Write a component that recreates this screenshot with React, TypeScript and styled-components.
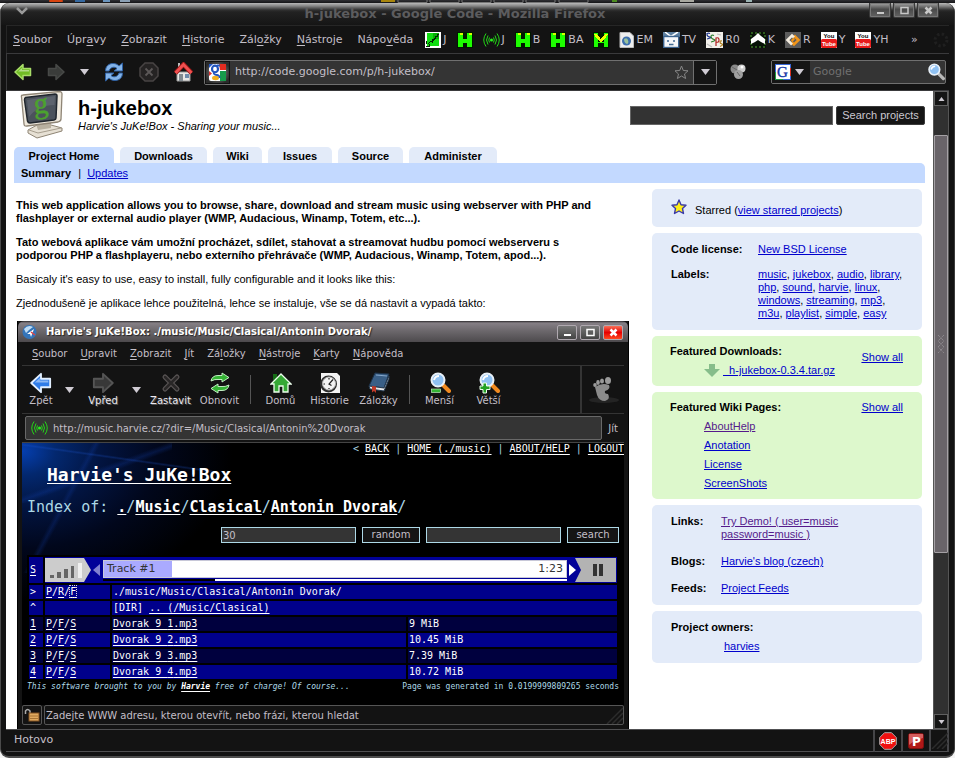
import React from "react";
import styled, { createGlobalStyle, css } from "styled-components";

const SANS = '"DejaVu Sans", sans-serif';
const ARIAL = '"Liberation Sans", Arial, sans-serif';
const MONO = '"DejaVu Sans Mono", monospace';

const GlobalStyle = createGlobalStyle`
  *, *::before, *::after { box-sizing: border-box; }
  body { margin: 0; background: #f4f4f4; overflow: hidden; }
  svg { display: block; flex: none; }
  button, input { font: inherit; color: inherit; margin: 0; padding: 0; border: 0; background: none; border-radius: 0; min-width: 0; }
  input:focus, button:focus { outline: none; }
`;

/* ---------- window chrome ---------- */

const Desktop = styled.div`
  display: flex;
  flex-direction: column;
  height: 100vh;
  font: 11px/14px ${SANS};
  color: #c3bfc7;
`;

const PanelStrip = styled.div`
  height: 3px;
  flex: none;
  background: linear-gradient(#303034, #151517);
  overflow: hidden;
`;

const Frame = styled.div`
  flex: 1;
  min-height: 0;
  display: flex;
  flex-direction: column;
  background: #131313;
  border-left: 1px solid #4a4a4a;
  border-right: 1px solid #3c3c3c;
  border-bottom: 2px solid #4e4e4e;
  border-radius: 9px;
  overflow: hidden;
`;

const TitleBar = styled.header`
  flex: none;
  height: 22px;
  display: grid;
  grid-template-columns: 40px 1fr 85px;
  background: linear-gradient(#b8b8b8 0, #868686 3px, #5a5a5a 5px, #303030 7px, #222 9px, #151515 22px);
`;

const TitleMenu = styled.button`
  display: flex;
  align-items: flex-start;
  padding: 4px 0 0 15px;
`;

const WindowTitle = styled.h1`
  margin: 0;
  padding-top: 2px;
  font: bold 13px/18px ${SANS};
  color: #5c5c5e;
  text-align: center;
  white-space: nowrap;
`;

const WindowButtons = styled.div`
  display: flex;
  gap: 2px;
`;

const WindowButton = styled.button`
  width: 22px;
  height: 15px;
  display: flex;
  justify-content: center;
  align-items: center;
  border: 1px solid #3a3a3a;
  border-top: 0;
  border-radius: 0 0 2px 2px;
  background: linear-gradient(#a5a5a5, #4a4a4a 45%, #626262);
  box-shadow: inset 0 0 0 1px #777;
  color: #c8c8c8;
`;

const Chrome = styled.div`
  flex: 1;
  min-height: 0;
  margin: 0 5px;
  display: flex;
  flex-direction: column;
`;

const MenuRow = styled.div`
  flex: none;
  height: 28px;
  display: flex;
  align-items: center;
  padding: 0 0 0 6px;
  border-top: 1px solid #262626;
  border-left: 1px solid #262626;
  white-space: nowrap;
`;

const MenuList = styled.nav<{ $small?: boolean }>`
  display: flex;
  gap: 15px;
  ${(p) => p.$small && css`font-size: 10px; gap: 13px;`}
`;

const MenuItem = styled.button`
  white-space: nowrap;
  u { text-underline-offset: 2px; }
`;

const BookmarkList = styled.div`
  display: flex;
  flex: 1;
  gap: 10px;
  padding-left: 12px;
`;

const Bookmark = styled.button`
  display: flex;
  align-items: center;
  gap: 2px;
  height: 16px;
`;

const Overflow = styled.button`
  width: 22px;
  height: 16px;
  text-align: left;
`;

const NavRow = styled.div`
  flex: none;
  height: 38px;
  display: flex;
  align-items: center;
  border: solid #3a3a3c;
  border-width: 1px 0 1px 1px;
  padding: 0 3px 0 7px;
`;

const NavButtons = styled.div`
  display: flex;
  align-items: center;
  gap: 15px;
  padding-right: 11px;
`;

const NavButton = styled.button`
  display: flex;
`;

const AddressBar = styled.div`
  flex: 1;
  height: 25px;
  display: flex;
  align-items: center;
  background: #343434;
  border: 1px solid #707070;
  border-radius: 2px;
`;

const SiteBadge = styled.span`
  align-self: stretch;
  width: 25px;
  display: grid;
  place-items: center;
  background: radial-gradient(#a0a0a0, #2a2a2a 80%);
  border: 1px solid #111;
`;

const AddressInput = styled.input`
  flex: 1;
  padding-left: 5px;
`;

const DropButton = styled.button`
  align-self: stretch;
  width: 23px;
  margin-left: 4px;
  display: grid;
  place-items: center;
  background: #151515;
  border-left: 1px solid #707070;
`;

const Foxy = styled.div`
  padding: 0 25px 0 13px;
`;

const SearchBar = styled.div`
  width: 175px;
  height: 24px;
  display: flex;
  align-items: center;
  background: #343434;
  border: 1px solid #707070;
  border-radius: 2px;
`;

const Engine = styled.button`
  align-self: stretch;
  display: flex;
  align-items: center;
  gap: 4px;
  width: 38px;
  padding-left: 3px;
  background: #151515;
`;

const SearchInput = styled.input`
  flex: 1;
  padding-left: 3px;
  &::placeholder { color: #707070; opacity: 1; }
`;

const Viewport = styled.div`
  flex: 1;
  min-height: 0;
  display: grid;
  grid-template-columns: 1fr 16px;
`;

const ScrollTrack = styled.div`
  display: flex;
  flex-direction: column;
  background: #303030;
  border: 1px solid #555;
  border-width: 0 1px;
`;

const ScrollArrow = styled.button`
  height: 15px;
  display: grid;
  place-items: center;
  border: 1px solid #606060;
  background: #151515;
`;

const ScrollSpace = styled.div<{ $grow: number }>`
  flex: ${(p) => p.$grow} 0 0;
`;

const ScrollThumb = styled.div`
  flex: 417 0 0;
  display: grid;
  place-items: center;
  border: 1px solid #a5a1a5;
  border-radius: 1px;
  background: #696469;
`;

const StatusBar = styled.footer`
  flex: none;
  height: 27px;
  display: grid;
  grid-template-columns: 1fr 28px 28px 18px;
  border-top: 1px solid #505052;
  padding-bottom: 4px;
`;

const StatusCell = styled.div<{ $text?: boolean }>`
  display: grid;
  align-items: center;
  justify-items: ${(p) => (p.$text ? "start" : "center")};
  border-right: 2px solid #454548;
  border-bottom: 1px solid #505052;
  padding: ${(p) => (p.$text ? "0 0 2px 8px" : "0")};
`;

/* ---------- project page ---------- */

const Page = styled.main`
  background: #fff;
  color: #000;
  font: 11px/13px ${ARIAL};
  overflow: hidden;
  padding: 0 8px;
`;

const Masthead = styled.div`
  display: flex;
  height: 56px;
  padding: 0 0 0 6px;
`;

const ProjectName = styled.div`
  flex: 1;
  padding: 6px 0 0 14px;
`;

const ProjectTitle = styled.h2`
  margin: 0;
  font: bold 20px/23px ${ARIAL};
`;

const Tagline = styled.em`
  display: block;
`;

const ProjectSearch = styled.form`
  display: flex;
  gap: 3px;
  align-items: flex-start;
  padding-top: 15px;
`;

const ProjectQuery = styled.input`
  width: 203px;
  height: 19px;
  background: #333;
  border: 1px solid #666;
  color: #ccc;
`;

const ProjectSubmit = styled.button`
  width: 89px;
  height: 19px;
  background: #151515;
  border: 1px solid #3a3a3a;
  border-radius: 2px;
  color: #ccc8d0;
`;

const Tabs = styled.nav`
  display: flex;
  gap: 6px;
  height: 16px;
`;

const Tab = styled.a<{ $active?: boolean; $w: number }>`
  width: ${(p) => p.$w}px;
  padding-top: 3px;
  border-radius: 5px 5px 0 0;
  background: ${(p) => (p.$active ? "#c3d9ff" : "#e3ebf9")};
  color: #000;
  font-weight: bold;
  text-align: center;
  text-decoration: none;
`;

const SubTabs = styled.div`
  height: 20px;
  padding: 4px 7px;
  background: #c3d9ff;
  border-radius: 0 5px 0 0;
  b { padding-right: 7px; }
`;

const Link = styled.a<{ $visited?: boolean }>`
  color: ${(p) => (p.$visited ? "#551a8b" : "#0000cc")};
  text-decoration: underline;
  text-underline-offset: 1px;
`;

const Columns = styled.div`
  display: grid;
  grid-template-columns: 1fr 270px;
  gap: 23px;
  padding: 6px 3px 0 2px;
  align-items: start;
`;

const Article = styled.article`
  padding-top: 10px;
  white-space: nowrap;
`;

const Para = styled.p<{ $strong?: boolean }>`
  margin: 0 0 11px;
  font-weight: ${(p) => (p.$strong ? "bold" : "normal")};
`;

const Aside = styled.aside`
  display: flex;
  flex-direction: column;
  gap: 6px;
`;

const Card = styled.section<{ $green?: boolean }>`
  padding: ${(p) => (p.$green ? "9px 19px 9px 18px" : "10px 19px")};
  border-radius: 5px;
  background: ${(p) => (p.$green ? "#ddf8cc" : "#e3ebf9")};
`;

const StarLine = styled.div`
  display: flex;
  align-items: center;
  gap: 8px;
  height: 18px;
  span { padding-top: 4px; }
  svg { margin-bottom: 2px; }
`;

const Facts = styled.dl<{ $label: number; $gap: number }>`
  margin: 0;
  display: grid;
  grid-template-columns: ${(p) => p.$label}px 1fr;
  row-gap: ${(p) => p.$gap}px;
  dt { font-weight: bold; }
  dd { margin: 0; }
`;

const CardSplit = styled.div`
  display: flex;
  justify-content: space-between;
  align-items: center;
  > a { padding-bottom: 7px; }
`;

const CardHead = styled.div`
  display: flex;
  justify-content: space-between;
  font-weight: bold;
  a { font-weight: normal; }
`;

const LinkStack = styled.div<{ $indent: number }>`
  display: flex;
  flex-direction: column;
  align-items: flex-start;
  gap: 6px;
  padding: 6px 0 0 ${(p) => p.$indent}px;
`;

const Download = styled.div`
  display: flex;
  align-items: center;
  gap: 3px;
  height: 13px;
`;

/* ---------- embedded player window ---------- */

const Shot = styled.figure`
  margin: 0 0 0 1px;
  background: #131313;
  color: #c3bfc7;
  font: 10px/13px ${SANS};
  border-left: 1px solid #000;
  border-right: 1px solid #000;
`;

const ShotTitle = styled.div`
  height: 21px;
  display: flex;
  align-items: center;
  gap: 9px;
  padding: 1px 5px 0 4px;
  border-radius: 6px 6px 0 0;
  background: linear-gradient(#2b292b, #857f85 2px, #6a666a 50%, #4d4a4d);
  color: #fff;
  font: bold 10px/14px ${SANS};
  text-shadow: 1px 1px 1px #222;
  strong { flex: 1; }
`;

const ShotButtons = styled.div`
  display: flex;
  gap: 3px;
`;

const ShotButton = styled.button<{ $close?: boolean }>`
  width: 20px;
  height: 15px;
  display: grid;
  place-items: center;
  border: 1px solid #b0a9b0;
  border-radius: 2px;
  color: #fff;
  background: ${(p) => (p.$close ? "linear-gradient(#f87058, #e60000 50%, #ff4a20)" : "linear-gradient(#777, #444)")};
`;

const ShotBody = styled.div`
  margin: 0 4px;
`;

const ShotMenu = styled.div`
  height: 23px;
  padding: 5px 10px;
`;

const ShotToolbar = styled.div`
  height: 49px;
  display: flex;
  border: 1px solid #343434;
  border-width: 1px 0;
`;

const Tool = styled.button<{ $w?: number; $bright?: boolean }>`
  width: ${(p) => p.$w ?? 49}px;
  display: flex;
  flex-direction: column;
  align-items: center;
  padding-top: 6px;
  white-space: nowrap;
  ${(p) => p.$bright && css`color: #ece8ef; text-shadow: 1px 1px 0 #555;`}
`;

const ToolCaret = styled.button`
  width: 19px;
  display: grid;
  place-items: center;
`;

const ToolRule = styled.span`
  width: 12px;
  display: flex;
  justify-content: center;
  padding: 9px 0;
  &::before { content: ""; width: 1px; background: #555; }
`;

const Throbber = styled.div`
  width: 44px;
  margin-left: auto;
  display: grid;
  place-items: center;
  border-left: 2px solid #343434;
`;

const ShotAddress = styled.div`
  height: 29px;
  display: flex;
  align-items: center;
  gap: 6px;
  padding: 0 6px 0 3px;
  border-bottom: 1px solid #444;
`;

const ShotField = styled.div`
  flex: 1;
  height: 24px;
  display: flex;
  align-items: center;
  gap: 5px;
  padding-left: 5px;
  border: 1px solid #686868;
  border-radius: 2px;
  background: #343434;
  input { flex: 1; }
`;

const Jukebox = styled.div`
  height: 262px;
  background:
    linear-gradient(8deg, transparent 47%, rgba(30, 90, 220, 0.25) 50%, transparent 53%) 0 0 / 190px 30px no-repeat,
    linear-gradient(-20deg, transparent 46%, rgba(20, 70, 190, 0.22) 50%, transparent 54%) 0 0 / 150px 60px no-repeat,
    linear-gradient(-62deg, transparent 47%, rgba(20, 70, 190, 0.2) 50%, transparent 53%) 0 0 / 80px 130px no-repeat,
    radial-gradient(ellipse 210px 150px at 0 8px, #053fb0 0, #03286f 16%, #021440 38%, #01071c 65%, #000 100%);
  background-color: #000;
  color: #add8e6;
  font: 10px/12px ${MONO};
  overflow: hidden;
`;

const TopLinks = styled.nav`
  text-align: right;
`;

const JukeLink = styled.a`
  color: #fff;
  text-underline-offset: 2px;
`;

const JukeTitle = styled.h3`
  margin: 0;
  padding: 8px 0 0 25px;
  font: bold 18px/24px ${MONO};
`;

const IndexLine = styled.h4`
  margin: 0;
  padding: 10px 0 0 5px;
  font: 15px/20px ${MONO};
  a { font-weight: bold; }
`;

const JukeForm = styled.form`
  display: flex;
  justify-content: flex-end;
  gap: 6px;
  padding: 10px 5px 0 0;
  font: 10px/12px ${SANS};
  color: #c3bfc7;
`;

const JukeInput = styled.input`
  width: 135px;
  height: 16px;
  padding-left: 1px;
  border: 1px solid #add8e6;
  background: #343434;
`;

const JukeButton = styled.button<{ $w: number }>`
  width: ${(p) => p.$w}px;
  height: 16px;
  border: 1px solid #add8e6;
  background: #151515;
`;

const Tracks = styled.table`
  width: calc(100% - 10px);
  margin: 12px 5px 0;
  border-spacing: 2px;
  table-layout: fixed;
  background: #000;
  color: #fff;
`;

const Cell = styled.td<{ $dark?: boolean; $flush?: boolean }>`
  height: 14px;
  padding: ${(p) => (p.$flush ? "0" : "0 1px")};
  background: ${(p) => (p.$dark ? "#00003e" : "#00008b")};
  line-height: 14px;
`;

const Player = styled.div`
  display: flex;
  align-items: center;
  height: 26px;
  padding: 0 1px 0 0;
  background: #000098;
  color: #333;
  font: 11px/14px ${SANS};
`;

const TrackColumn = styled.div`
  flex: 1;
  margin: 0 2px;
`;

const TrackBar = styled.div`
  display: flex;
  align-items: center;
  justify-content: space-between;
  height: 18px;
  padding: 0 3px;
  border: 1px solid #c8c8d8;
  background: linear-gradient(90deg, #aaaaff 68px, #fff 68px);
`;

const Progress = styled.div`
  height: 2px;
  margin-top: 1px;
  background: linear-gradient(90deg, #000 112px, #fff 112px);
`;

const Focused = styled.span`
  outline: 1px dotted #ddd;
`;

const JukeFooter = styled.div`
  display: flex;
  justify-content: space-between;
  padding: 0 5px;
  font: 8px/11px ${MONO};
  i a { font-weight: bold; }
`;

const ShotStatus = styled.div`
  display: flex;
  gap: 2px;
  height: 25px;
  padding-bottom: 5px;
  font-size: 10px;
`;

const LockBox = styled.div`
  width: 20px;
  display: grid;
  place-items: center;
  border: 1px solid #555;
  border-radius: 2px;
`;

const StatusText = styled.div`
  flex: 1;
  display: flex;
  justify-content: space-between;
  align-items: center;
  padding-left: 1px;
  border: 1px solid #555;
  border-radius: 2px;
`;

/* ---------- drawings ---------- */

const Caret = ({ up, size = 9 }: { up?: boolean; size?: number }) => (
  <svg width={size} height={size === 9 ? 6 : 4} viewBox="0 0 9 6">
    <path d={up ? "M0 6L4.500 0L9 6z" : "M0 0L4.500 6L9 0z"} fill="#d0ccd4" />
  </svg>
);

const Arrow = ({ fill, edge, flip, size = 18 }: { fill: string; edge: string; flip?: boolean; size?: number }) => (
  <svg width={size} height={size} viewBox="0 0 18 18">
    <path
      d="M1 9L9 1.500V5.500H16.500V12.500H9V16.500Z"
      transform={flip ? "translate(18 0) scale(-1 1)" : undefined}
      fill={fill} stroke={edge} strokeWidth="1.500" strokeLinejoin="round"
    />
    {!flip && <path d="M4 8.500L8 5V7H15V8.500z" fill="#fff" opacity=".45" />}
  </svg>
);

const Reload = () => (
  <svg width="20" height="20" viewBox="0 0 20 20">
    {[0, 180].map((r) => (
      <g key={r} transform={`rotate(${r} 10 10)`}>
        <path d="M1.500 9C1.500 4 5 1.500 9 1.500C12 1.500 13.500 2.500 15 4L18.500 1V9H10L13 6.500C11 4.500 6.500 4.500 5 9Z" fill="#83b3e8" stroke="#2d5fa2" />
      </g>
    ))}
  </svg>
);

const GreenReload = () => (
  <svg width="22" height="22" viewBox="0 0 22 22">
    {[0, 180].map((r) => (
      <g key={r} transform={`rotate(${r} 11 11)`}>
        <path d="M2 9Q3 3.500 9 3.500H13V1L20 5.500L13 10V7.500H9Q6 7 2 9Z" fill="#35b335" stroke="#d2fbd2" strokeWidth=".9" />
      </g>
    ))}
  </svg>
);

const Stop = () => (
  <svg width="20" height="20" viewBox="0 0 20 20">
    <path d="M6 1H14L19 6V14L14 19H6L1 14V6Z" fill="#252323" stroke="#484444" strokeWidth="1.500" />
    <path d="M6.500 6.500L13.500 13.500M13.500 6.500L6.500 13.500" stroke="#5c5858" strokeWidth="1.800" />
  </svg>
);

const House = () => (
  <svg width="19" height="20" viewBox="0 0 19 20">
    <path d="M3 10H16V19H3Z" fill="#e8e8e6" stroke="#999" />
    <path d="M4 1H6V6H4Z" fill="#bbb" />
    <path d="M1.500 11L9.500 2.500L17.500 11" fill="none" stroke="#a01818" strokeWidth="4.500" />
    <path d="M1.500 11L9.500 2.500L17.500 11" fill="none" stroke="#f05050" strokeWidth="2.800" />
    <path d="M5 12H9V19H5Z" fill="#808a90" /><path d="M11 12H15V16H11Z" fill="#6e8cab" />
  </svg>
);

const GoogleBadge = () => (
  <svg width="17" height="17" viewBox="0 0 17 17">
    <rect width="17" height="17" rx="2" fill="#fff" />
    <path d="M10 0H17V6H11Z" fill="#e22b20" /><path d="M11 7H17V17H11Z" fill="#179b4b" />
    <path d="M0 4V0H4Z" fill="#2457c5" /><path d="M0 12V7L3 9.500Z" fill="#d93333" />
    <ellipse cx="6.500" cy="14" rx="3.500" ry="2.200" fill="#f2b01e" />
    <ellipse cx="6" cy="5" rx="3" ry="3.300" fill="#fff" stroke="#2356bd" strokeWidth="2.200" />
    <path d="M8 1.500H11M5 8.500Q4 10.500 8 11Q11 11.500 10.500 14" fill="none" stroke="#2356bd" strokeWidth="1.800" />
  </svg>
);

const GoogleG = () => (
  <svg width="16" height="16" viewBox="0 0 16 16">
    <rect x=".5" y=".5" width="15" height="15" fill="#fff" stroke="#3868d8" />
    <path d="M.5 8V15.500H8" fill="none" stroke="#20a040" /><path d="M15.500 4V12" stroke="#d83020" />
    <text x="2" y="13" fontFamily="Liberation Serif" fontSize="15" fill="#1438a8" stroke="#1438a8" strokeWidth=".4">G</text>
  </svg>
);

const Magnifier = ({ sign, size = 18 }: { sign?: "+" | "-"; size?: number }) => (
  <svg width={size} height={size} viewBox="0 0 22 22">
    <path d="M14 13L20 19" stroke={sign ? "#f08a20" : "#b8b8b8"} strokeWidth="4" strokeLinecap="round" />
    <circle cx="9" cy="8" r="6.500" fill="#8fc1f2" stroke="#e8f0f8" strokeWidth="2" />
    <path d="M5 8Q6 4 10 4" fill="none" stroke="#fff" strokeWidth="2" />
    {sign === "-" && <rect x="2.500" y="17" width="9" height="3.500" fill="#34b234" stroke="#d8ffd8" strokeWidth=".6" />}
    {sign === "+" && <path d="M5 11H8.500V14H12V17.500H8.500V21H5V17.500H2V14H5Z" fill="#22a022" stroke="#eaffea" />}
  </svg>
);

const HLogo = () => (
  <svg width="16" height="16" viewBox="0 0 16 16" shapeRendering="crispEdges">
    <rect width="16" height="16" fill="#001800" />
    <rect x="1" y="1" width="5" height="14" fill="#1dff00" /><rect x="10" y="1" width="5" height="14" fill="#1dff00" />
    <rect x="6" y="7" width="4" height="4" fill="#1dff00" />
    <rect x="3" y="1" width="3" height="2" fill="#d8ff00" /><rect x="12" y="1" width="3" height="2" fill="#d8ff00" />
  </svg>
);

const MLogo = () => (
  <svg width="16" height="16" viewBox="0 0 16 16" shapeRendering="crispEdges">
    <rect width="16" height="16" fill="#001800" />
    <rect x="1" y="1" width="4" height="14" fill="#1dff00" /><rect x="11" y="1" width="4" height="14" fill="#1dff00" />
    <rect x="5" y="10" width="6" height="1" fill="#1dff00" />
    <path d="M2 2L8 9L14 2" fill="none" stroke="#f0ff00" strokeWidth="2.500" />
  </svg>
);

const Antenna = () => (
  <svg width="17" height="16" viewBox="0 0 17 16">
    <g fill="none" stroke="#24d818" strokeWidth="1">
      <path d="M3 1.500Q-1.500 8 3 14.500M5 3.500Q2 8 5 12.500M6.500 5.500Q5 8 6.500 10.500" />
      <path d="M14 1.500Q18.500 8 14 14.500M12 3.500Q15 8 12 12.500M10.500 5.500Q12 8 10.500 10.500" />
    </g>
    <circle cx="8.500" cy="8" r="1.500" fill="#24f818" />
  </svg>
);

const Circuit = () => (
  <svg width="16" height="16" viewBox="0 0 16 16" shapeRendering="crispEdges">
    <rect width="16" height="16" fill="#fff" />
    <rect x="2" y="1" width="12" height="13" fill="#12dd12" /><rect x="8" y="1" width="6" height="6" fill="#05b005" />
    <path d="M1 14H4V12M3 12L6 9L8 9L11 5L14 2M7 7V11M10 4V7M12 2V5M1 9V12" stroke="#052005" fill="none" strokeWidth="1" />
  </svg>
);

const GlobePage = () => (
  <svg width="15" height="16" viewBox="0 0 15 16">
    <path d="M1 .5H11L14.500 4V15.500H1Z" fill="#eee" stroke="#bbb" />
    <circle cx="7.500" cy="9" r="4.500" fill="#3d6fae" /><path d="M5 7Q8 5 9 8T8 12Q5 11 5 7Z" fill="#9ac29c" />
  </svg>
);

const TvIcon = () => (
  <svg width="17" height="16" viewBox="0 0 17 16">
    <rect width="17" height="5" fill="#5d7f9f" /><path d="M2 0L8 4.500L15 0" fill="none" stroke="#fff" strokeWidth="1.500" />
    <rect x=".7" y="4.500" width="15" height="11" fill="#f5f7fa" stroke="#3b638e" strokeWidth="1.400" />
    <path d="M4 9H6M10 9H12M6 12.500H10.500" stroke="#416a92" strokeWidth="1.500" />
  </svg>
);

const SpsIcon = () => (
  <svg width="17" height="16" viewBox="0 0 17 16">
    <rect width="17" height="16" fill="#f2f0ea" />
    <g fill="none" strokeWidth="1.200">
      <path d="M4 1.500Q1 .5 1 2.500T4 5T1 7M1 1V2" stroke="#203890" />
      <path d="M8 3.500Q5 2.500 5 4.500T8 7.500T5 10" stroke="#308030" />
      <path d="M10 14V6Q13 5 13 8T10 10" stroke="#b02020" />
      <path d="M16 9Q14 8.500 14 10T16 12T14 14.500" stroke="#b08020" />
      <path d="M1 12L6 15M11 2L15 3" stroke="#bbb" />
    </g>
  </svg>
);

const FortIcon = () => (
  <svg width="16" height="16" viewBox="0 0 16 16">
    <rect width="16" height="16" fill="#071207" />
    <rect x="1" y="1" width="14" height="14" fill="none" stroke="#3b7426" strokeWidth="1.500" strokeDasharray="2 2" />
    <path d="M1 7L5 4L8 1L11 4L15 7V12L11 10L8 8L5 10L1 12Z" fill="#fff" />
  </svg>
);

const RingIcon = () => (
  <svg width="16" height="16" viewBox="0 0 16 16">
    <rect width="16" height="16" fill="#5c5c5c" />
    <path d="M9 3.500L13.500 8L9 12.500L7 10.500" fill="none" stroke="#f29518" strokeWidth="2.600" />
    <path d="M9 5.500L7 3.500L2.500 8L7 12.500" fill="none" stroke="#f4ede0" strokeWidth="2.600" />
    <path d="M6 8L8.500 5.500L10 7L7 10.500Z" fill="#f29518" />
  </svg>
);

const YouTube = () => (
  <svg width="16" height="16" viewBox="0 0 16 16">
    <rect width="16" height="16" fill="#fff" /><rect y="7" width="16" height="9" rx="1.500" fill="#e81c1c" />
    <g fontFamily="Liberation Sans" fontWeight="bold" fontSize="6" textAnchor="middle">
      <text x="8" y="6" fill="#000">You</text>
      <text x="8" y="14" fill="#fff">Tube</text>
    </g>
  </svg>
);

const StarOutline = () => (
  <svg width="15" height="15" viewBox="0 0 15 15">
    <path d="M7.500 1L9.300 5.500L14 5.800L10.500 9L11.600 13.500L7.500 11L3.400 13.500L4.500 9L1 5.800L5.700 5.500Z" fill="none" stroke="#888" />
  </svg>
);

const StarFilled = () => (
  <svg width="16" height="16" viewBox="0 0 16 16">
    <path d="M8 1L10 5.700L15 6.200L11.500 9.600L12.500 14.500L8 12L3.500 14.500L4.500 9.600L1 6.200L6 5.700Z" fill="#ffee18" stroke="#3a3aa8" strokeWidth="1.400" strokeLinejoin="round" />
  </svg>
);

const FoxyIcon = () => (
  <svg width="16" height="16" viewBox="0 0 16 16">
    <circle cx="5" cy="5" r="4.500" fill="#8a8a8a" /><circle cx="11.500" cy="4.500" r="4" fill="#ccc" />
    <circle cx="8.500" cy="10.500" r="4.500" fill="#a0a0a0" /><circle cx="12" cy="3" r="1.500" fill="#fff" />
    <path d="M2 3L7 6M7 8L10 12" stroke="#666" />
  </svg>
);

const Spinner = () => (
  <svg width="16" height="16" viewBox="0 0 16 16">
    <circle cx="8" cy="8" r="6" fill="none" stroke="#1f1f1f" strokeWidth="3" strokeDasharray="2.500 2.200" />
  </svg>
);

const ProjectLogo = () => (
  <svg width="44" height="48" viewBox="0 0 44 48">
    <path d="M8 39L17 34H31L42 37V40L17 47L8 42Z" fill="#e6e0d4" stroke="#8e8474" />
    <path d="M9 39L18 42L41 37" fill="none" stroke="#a79e8e" /><path d="M16 33L31 31V37L18 39Z" fill="#b8b0a0" />
    <path d="M3 4Q1 4 1.500 6L4 33Q4 35.500 7 35L38 31Q41 30 41 28L42 3Q42 .5 39 .5Z" fill="#eee8dc" stroke="#8f8576" strokeWidth="1.300" />
    <path d="M5.500 6.500L35 3Q37 3 37 5L36 27Q36 28.500 34 29L10 32Q8 32 7.500 30L4.500 9Q4.500 7 5.500 6.500Z" fill="#4b525c" stroke="#20262e" strokeWidth="1.500" />
    <path d="M7 9L35 5L34.500 14Q18 14 9 26Z" fill="#697079" opacity=".6" />
    <text x="14" y="22" fontFamily="Liberation Serif" fontSize="29" fill="#4ba22e" stroke="#4ba22e" strokeWidth=".5" transform="rotate(-4 21 18)">g</text>
  </svg>
);

const DownArrow = () => (
  <svg width="16" height="14" viewBox="0 0 16 14"><path d="M5 0H11V5H16L8 13L0 5H5Z" fill="#86bd8a" /></svg>
);

const ShotLogo = () => (
  <svg width="15" height="16" viewBox="0 0 15 16">
    <circle cx="7.500" cy="8" r="7" fill="#3474b8" /><path d="M2 5Q6 0 11 3L7 6L4 9Z" fill="#bfdcf4" />
    <path d="M5 10L12 5L9 13L8 10Z" fill="#fff" /><path d="M9 8L13 11" stroke="#d44" strokeWidth="1.500" />
  </svg>
);

const Cross = () => (
  <svg width="22" height="22" viewBox="0 0 22 22">
    <path d="M5 5L17 17M17 5L5 17" stroke="#575353" strokeWidth="5" strokeLinecap="round" />
    <path d="M5 5L17 17M17 5L5 17" stroke="#292727" strokeWidth="2.500" strokeLinecap="round" />
  </svg>
);

const GreenHome = () => (
  <svg width="22" height="22" viewBox="0 0 22 22">
    <path d="M3 2H7V6L3 9Z" fill="#146b14" />
    <path d="M11 2L21 12H18V20H13V14H9V20H4V12H1Z" fill="#35a835" stroke="#ecffec" strokeWidth="1.300" />
  </svg>
);

const ClockIcon = () => (
  <svg width="22" height="22" viewBox="0 0 22 22">
    <path d="M2 1H18L21 4V21H2Z" fill="#f4f4f4" /><circle cx="9.500" cy="12" r="8.500" fill="#2c2c2c" />
    <circle cx="10" cy="11.500" r="6.500" fill="#f4f4f4" stroke="#bbb" />
    <path d="M14 7.500L10 12L12.500 13.500M10 6V7.500M4.500 12H6M10 16V17" stroke="#222" strokeWidth="1.200" fill="none" />
  </svg>
);

const BookIcon = () => (
  <svg width="22" height="22" viewBox="0 0 22 22">
    <path d="M7 1L21 2L16 16L1 14Z" fill="#3a5f86" stroke="#1c3148" /><path d="M1 14L16 16L21 4V7L16 19L2 17Z" fill="#e8e8e8" stroke="#24384e" />
    <path d="M4 14L8 14.500V21L6 19L4 20.500Z" fill="#c03a28" /><path d="M8 3L19 4" stroke="#86a8cc" />
  </svg>
);

const Foot = () => (
  <svg width="34" height="28" viewBox="0 0 34 28">
    <ellipse cx="18" cy="24" rx="15" ry="3" fill="#242424" />
    <path d="M9 11Q16 6 23 9Q25 13 19 15Q18 18 22 18Q25 23 19 25Q13 25 11 19Z" fill="#8b8b8b" />
    <g fill="#9a9a9a"><ellipse cx="9" cy="9" rx="1.800" ry="2" /><ellipse cx="12" cy="6.500" rx="1.800" ry="2.400" /><ellipse cx="16" cy="5" rx="2" ry="2.500" /><ellipse cx="22" cy="4.500" rx="3" ry="3.500" /></g>
  </svg>
);

const Volume = () => (
  <svg width="46" height="24" viewBox="0 0 46 24">
    <path d="M0 0H39L46 12L39 24H0Z" fill="#ccc" />
    <g fill="#666"><rect x="5" y="17" width="4" height="3" /><rect x="12" y="14" width="4" height="6" /><rect x="19" y="11" width="4" height="9" /><rect x="26" y="8" width="3" height="12" /></g>
    <rect x="33" y="5" width="4" height="15" fill="#f0f0f0" />
  </svg>
);

const Pause = () => (
  <svg width="47" height="24" viewBox="0 0 47 24">
    <path d="M0 6L7 12L0 18Z" fill="#fff" /><path d="M6 0H47V24H6L12 12Z" fill="#b3b3b3" />
    <rect x="24" y="6" width="4" height="12" fill="#333" /><rect x="30" y="6" width="4" height="12" fill="#333" />
  </svg>
);

const Lock = () => (
  <svg width="16" height="14" viewBox="0 0 16 14">
    <path d="M1.500 6V3Q3.500 0 6 3V7" fill="none" stroke="#aaa" strokeWidth="1.500" />
    <rect x="5" y="5" width="10" height="8" fill="#e0aa60" stroke="#805020" /><path d="M6 8H14M6 10.500H14" stroke="#a87434" />
  </svg>
);

const Grip = () => (
  <svg width="17" height="17" viewBox="0 0 17 17"><path d="M1 17L17 1M6 17L17 6M11 17L17 11" stroke="#2c2c2c" strokeWidth="1.500" /></svg>
);

const Abp = () => (
  <svg width="18" height="18" viewBox="0 0 18 18">
    <path d="M5.500 .7H12.500L17.300 5.500V12.500L12.500 17.300H5.500L.7 12.500V5.500Z" fill="#ee1010" stroke="#aaa" />
    <text x="9" y="12" textAnchor="middle" fontFamily="Liberation Sans" fontWeight="bold" fontSize="7" fill="#fff">ABP</text>
  </svg>
);

const PIcon = () => (
  <svg width="16" height="16" viewBox="0 0 16 16">
    <rect x=".5" y=".5" width="15" height="15" rx="2" fill="#b01818" stroke="#801010" /><path d="M1 1H15V5Q6 7 1 12Z" fill="#e47a7a" opacity=".7" />
    <text x="4" y="12.500" fontFamily="DejaVu Sans" fontWeight="bold" fontSize="12" fill="#fff">P</text>
  </svg>
);

const Glyph = ({ kind }: { kind: "min" | "max" | "close" }) => (
  <svg width="11" height="9" viewBox="0 0 11 9" fill="none" stroke="currentColor" strokeWidth="2">
    {kind === "min" && <path d="M2 7H9" />}
    {kind === "max" && <rect x="2" y="1.500" width="7" height="6" strokeWidth="1.500" />}
    {kind === "close" && <path d="M2.500 1.500L8.500 7.500M8.500 1.500L2.500 7.500" strokeWidth="2.500" />}
  </svg>
);

const PanelBits = () => (
  <svg width="955" height="3" viewBox="0 0 955 3">
    <rect x="49" width="14" height="2" rx="1" fill="#d84410" /><rect x="75" width="10" height="2" fill="#3468a0" /><rect x="103" width="7" height="2" fill="#6a94bc" /><rect x="120" width="10" height="2" fill="#8ba0b4" />
    <rect x="381" width="14" height="2" fill="#a8850c" /><path d="M398 0V2.500H427V0M430 0V2.500H459V0M462 0V2.500H491V0M494 0V2.500H523V0M526 0V2.500H555V0M559 0V2.500H588V0" fill="none" stroke="#777" />
    <rect x="612" width="5" height="2" fill="#4c8b20" /><rect x="680" width="14" height="2" fill="#a8a8a0" /><rect x="746" width="6" height="2" fill="#9cb4b4" />
  </svg>
);

/* ---------- data ---------- */

type Label = [string, string, string];

const mainMenu: Label[] = [["", "S", "oubor"], ["Úpr", "a", "vy"], ["", "Z", "obrazit"], ["", "H", "istorie"], ["Zál", "o", "žky"], ["", "N", "ástroje"], ["Nápo", "v", "ěda"]];
const shotMenu: Label[] = [["", "S", "oubor"], ["", "U", "pravit"], ["", "Z", "obrazit"], ["", "J", "ít"], ["Zá", "l", "ožky"], ["", "N", "ástroje"], ["", "K", "arty"], ["", "N", "ápověda"]];

const bookmarks: [React.FC, string][] = [
  [Circuit, "J"], [HLogo, ""], [Antenna, "J"], [HLogo, "B"], [HLogo, "BA"], [MLogo, ""], [GlobePage, "EM"],
  [TvIcon, "TV"], [SpsIcon, "R0"], [FortIcon, "K"], [RingIcon, "R"], [YouTube, "Y"], [YouTube, "YH"],
];

const tabs: [string, number][] = [["Project Home", 100], ["Downloads", 87], ["Wiki", 49], ["Issues", 64], ["Source", 65], ["Administer", 88]];
const labels = ["music", "jukebox", "audio", "library", "php", "sound", "harvie", "linux", "windows", "streaming", "mp3", "m3u", "playlist", "simple", "easy"];
const tracks = [["1", "9 MiB"], ["2", "10.45 MiB"], ["3", "7.39 MiB"], ["4", "10.72 MiB"]];

const Menu = ({ items, small }: { items: Label[]; small?: boolean }) => (
  <MenuList $small={small}>
    {items.map(([a, k, b]) => (
      <MenuItem key={a + k + b}>{a}<u>{k}</u>{b}</MenuItem>
    ))}
  </MenuList>
);

const JLink = ({ children }: { children: React.ReactNode }) => <JukeLink href="#">{children}</JukeLink>;

const PlayerWindow = () => (
  <Shot>
    <ShotTitle>
      <ShotLogo />
      <strong>Harvie's JuKe!Box: ./music/Music/Clasical/Antonin Dvorak/</strong>
      <ShotButtons>
        <ShotButton aria-label="Minimize"><Glyph kind="min" /></ShotButton>
        <ShotButton aria-label="Maximize"><Glyph kind="max" /></ShotButton>
        <ShotButton aria-label="Close" $close><Glyph kind="close" /></ShotButton>
      </ShotButtons>
    </ShotTitle>
    <ShotBody>
      <ShotMenu><Menu items={shotMenu} small /></ShotMenu>
      <ShotToolbar>
        <Tool $w={38}><Arrow fill="#2f7ce8" edge="#e2efff" size={22} />Zpět</Tool>
        <ToolCaret aria-label="Back history"><Caret /></ToolCaret>
        <Tool $w={48} $bright><Arrow fill="#383838" edge="#555" flip size={22} />Vpřed</Tool>
        <ToolCaret aria-label="Forward history"><Caret /></ToolCaret>
        <Tool $bright><Cross />Zastavit</Tool>
        <Tool><GreenReload />Obnovit</Tool>
        <ToolRule />
        <Tool><GreenHome />Domů</Tool>
        <Tool><ClockIcon />Historie</Tool>
        <Tool><BookIcon />Záložky</Tool>
        <ToolRule />
        <Tool><Magnifier sign="-" size={22} />Menší</Tool>
        <Tool><Magnifier sign="+" size={22} />Větší</Tool>
        <Throbber><Foot /></Throbber>
      </ShotToolbar>
      <ShotAddress>
        <ShotField>
          <Antenna />
          <input aria-label="Address" defaultValue="http://music.harvie.cz/?dir=/Music/Clasical/Antonin%20Dvorak" />
        </ShotField>
        <button>Jít</button>
      </ShotAddress>
      <Jukebox>
        <TopLinks>
          {"< "}<JLink>BACK</JLink> | <JLink>HOME (./music)</JLink> | <JLink>ABOUT/HELP</JLink> | <JLink>LOGOUT</JLink>
        </TopLinks>
        <JukeTitle><JLink>Harvie's JuKe!Box</JLink></JukeTitle>
        <IndexLine>Index of: <JLink>.</JLink>/<JLink>Music</JLink>/<JLink>Clasical</JLink>/<JLink>Antonin Dvorak</JLink>/</IndexLine>
        <JukeForm onSubmit={(e) => e.preventDefault()}>
          <JukeInput aria-label="Count" defaultValue="30" />
          <JukeButton $w={58}>random</JukeButton>
          <JukeInput aria-label="Query" />
          <JukeButton $w={52}>search</JukeButton>
        </JukeForm>
        <Tracks>
          <colgroup><col width="14" /><col width="65" /><col width="294" /><col /></colgroup>
          <tbody>
            <tr>
              <Cell><JLink>S</JLink></Cell>
              <Cell colSpan={3} $flush>
                <Player>
                  <Volume />
                  <svg width="10" height="12" viewBox="0 0 10 12"><path d="M9 0L2 6L9 12Z" fill="#8080d0" /></svg>
                  <TrackColumn>
                    <TrackBar><span>Track #1</span><span>1:23</span></TrackBar>
                    <Progress />
                  </TrackColumn>
                  <Pause />
                </Player>
              </Cell>
            </tr>
            <tr>
              <Cell>&gt;</Cell>
              <Cell><JLink>P</JLink>/<JLink>R</JLink>/<Focused><JLink>F</JLink></Focused></Cell>
              <Cell colSpan={2}>./music/Music/Clasical/Antonin Dvorak/</Cell>
            </tr>
            <tr>
              <Cell>^</Cell>
              <Cell />
              <Cell colSpan={2}>[DIR] <JLink>.. (/Music/Clasical)</JLink></Cell>
            </tr>
            {tracks.map(([n, size], i) => (
              <tr key={n}>
                <Cell $dark={i % 2 === 0}><JLink>{n}</JLink></Cell>
                <Cell $dark={i % 2 === 0}><JLink>P</JLink>/<JLink>F</JLink>/<JLink>S</JLink></Cell>
                <Cell $dark={i % 2 === 0}><JLink>Dvorak 9 {n}.mp3</JLink></Cell>
                <Cell $dark={i % 2 === 0}>{size}</Cell>
              </tr>
            ))}
          </tbody>
        </Tracks>
        <JukeFooter>
          <i>This software brought to you by <JLink>Harvie</JLink> free of charge! Of course...</i>
          <span>Page was generated in 0.0199999809265 seconds</span>
        </JukeFooter>
      </Jukebox>
      <ShotStatus>
        <LockBox><Lock /></LockBox>
        <StatusText>Zadejte WWW adresu, kterou otevřít, nebo frázi, kterou hledat<Grip /></StatusText>
      </ShotStatus>
    </ShotBody>
  </Shot>
);

export default function App() {
  return (
    <Desktop>
      <GlobalStyle />
      <PanelStrip><PanelBits /></PanelStrip>
      <Frame>
        <TitleBar>
          <TitleMenu aria-label="Window menu">
            <svg width="12" height="8" viewBox="0 0 12 8"><path d="M1 1L6 6L11 1" fill="none" stroke="#999" strokeWidth="2.500" /></svg>
          </TitleMenu>
          <WindowTitle>h-jukebox - Google Code - Mozilla Firefox</WindowTitle>
          <WindowButtons>
            <WindowButton aria-label="Minimize"><Glyph kind="min" /></WindowButton>
            <WindowButton aria-label="Maximize"><Glyph kind="max" /></WindowButton>
            <WindowButton aria-label="Close"><Glyph kind="close" /></WindowButton>
          </WindowButtons>
        </TitleBar>
        <Chrome>
          <MenuRow>
            <Menu items={mainMenu} />
            <BookmarkList>
              {bookmarks.map(([Icon, text], i) => (
                <Bookmark key={i} aria-label={text || "Bookmark"}><Icon />{text}</Bookmark>
              ))}
            </BookmarkList>
            <Overflow>»</Overflow>
            <Spinner />
          </MenuRow>
          <NavRow>
            <NavButtons>
              <NavButton aria-label="Back"><Arrow fill="#71bd25" edge="#a8dc68" /></NavButton>
              <NavButton aria-label="Forward"><Arrow fill="#3a3c3a" edge="#474947" flip /></NavButton>
              <NavButton aria-label="History"><Caret /></NavButton>
              <NavButton aria-label="Reload"><Reload /></NavButton>
              <NavButton aria-label="Stop"><Stop /></NavButton>
              <NavButton aria-label="Home"><House /></NavButton>
            </NavButtons>
            <AddressBar>
              <SiteBadge><GoogleBadge /></SiteBadge>
              <AddressInput aria-label="Location" defaultValue="http://code.google.com/p/h-jukebox/" />
              <StarOutline />
              <DropButton aria-label="Show history"><Caret /></DropButton>
            </AddressBar>
            <Foxy><FoxyIcon /></Foxy>
            <SearchBar>
              <Engine aria-label="Search engine"><GoogleG /><Caret /></Engine>
              <SearchInput aria-label="Web search" placeholder="Google" />
              <Magnifier />
            </SearchBar>
          </NavRow>
          <Viewport>
            <Page>
              <Masthead>
                <ProjectLogo />
                <ProjectName>
                  <ProjectTitle>h-jukebox</ProjectTitle>
                  <Tagline>Harvie's JuKe!Box - Sharing your music...</Tagline>
                </ProjectName>
                <ProjectSearch onSubmit={(e) => e.preventDefault()}>
                  <ProjectQuery aria-label="Search projects" />
                  <ProjectSubmit>Search projects</ProjectSubmit>
                </ProjectSearch>
              </Masthead>
              <Tabs>
                {tabs.map(([t, w], i) => (
                  <Tab key={t} href="#" $w={w} $active={i === 0}>{t}</Tab>
                ))}
              </Tabs>
              <SubTabs><b>Summary</b>| &nbsp;<Link href="#">Updates</Link></SubTabs>
              <Columns>
                <Article>
                  <Para $strong>This web application allows you to browse, share, download and stream music using webserver with PHP and<br />flashplayer or external audio player (WMP, Audacious, Winamp, Totem, etc...).</Para>
                  <Para $strong>Tato webová aplikace vám umožní procházet, sdílet, stahovat a streamovat hudbu pomocí webserveru s<br />podporou PHP a flashplayeru, nebo externího přehrávače (WMP, Audacious, Winamp, Totem, apod...).</Para>
                  <Para>Basicaly it's easy to use, easy to install, fully configurable and it looks like this:</Para>
                  <Para>Zjednodušeně je aplikace lehce použitelná, lehce se instaluje, vše se dá nastavit a vypadá takto:</Para>
                  <PlayerWindow />
                </Article>
                <Aside>
                  <Card>
                    <StarLine><StarFilled /><span>Starred (<Link href="#">view starred projects</Link>)</span></StarLine>
                  </Card>
                  <Card>
                    <Facts $label={87} $gap={12}>
                      <dt>Code license:</dt><dd><Link href="#">New BSD License</Link></dd>
                      <dt>Labels:</dt>
                      <dd>{labels.map((l, i) => <React.Fragment key={l}>{i > 0 && ", "}<Link href="#">{l}</Link></React.Fragment>)}</dd>
                    </Facts>
                  </Card>
                  <Card $green>
                    <CardSplit>
                      <div>
                        <CardHead>Featured Downloads:</CardHead>
                        <LinkStack $indent={34}><Download><DownArrow /><Link href="#">&nbsp; h-jukebox-0.3.4.tar.gz</Link></Download></LinkStack>
                      </div>
                      <Link href="#">Show all</Link>
                    </CardSplit>
                  </Card>
                  <Card $green>
                    <CardHead>Featured Wiki Pages:<Link href="#">Show all</Link></CardHead>
                    <LinkStack $indent={34}>
                      <Link href="#" $visited>AboutHelp</Link>
                      <Link href="#">Anotation</Link>
                      <Link href="#">License</Link>
                      <Link href="#">ScreenShots</Link>
                    </LinkStack>
                  </Card>
                  <Card>
                    <Facts $label={50} $gap={14}>
                      <dt>Links:</dt><dd><Link href="#" $visited>Try Demo! ( user=music<br />password=music )</Link></dd>
                      <dt>Blogs:</dt><dd><Link href="#">Harvie's blog (czech)</Link></dd>
                      <dt>Feeds:</dt><dd><Link href="#">Project Feeds</Link></dd>
                    </Facts>
                  </Card>
                  <Card>
                    <CardHead>Project owners:</CardHead>
                    <LinkStack $indent={53}><Link href="#">harvies</Link></LinkStack>
                  </Card>
                </Aside>
              </Columns>
            </Page>
            <ScrollTrack>
              <ScrollArrow aria-label="Scroll up"><Caret up size={7} /></ScrollArrow>
              <ScrollSpace $grow={29} />
              <ScrollThumb>
                <svg width="8" height="20" viewBox="0 0 8 20"><path d="M1 1L7 7L1 13L7 19M7 1L1 7L7 13L1 19" stroke="#9b979b" fill="none" strokeDasharray="1 1" /></svg>
              </ScrollThumb>
              <ScrollSpace $grow={162} />
              <ScrollArrow aria-label="Scroll down"><Caret size={7} /></ScrollArrow>
            </ScrollTrack>
          </Viewport>
          <StatusBar>
            <StatusCell $text>Hotovo</StatusCell>
            <StatusCell><Abp /></StatusCell>
            <StatusCell><PIcon /></StatusCell>
            <StatusCell><Grip /></StatusCell>
          </StatusBar>
        </Chrome>
      </Frame>
    </Desktop>
  );
}
